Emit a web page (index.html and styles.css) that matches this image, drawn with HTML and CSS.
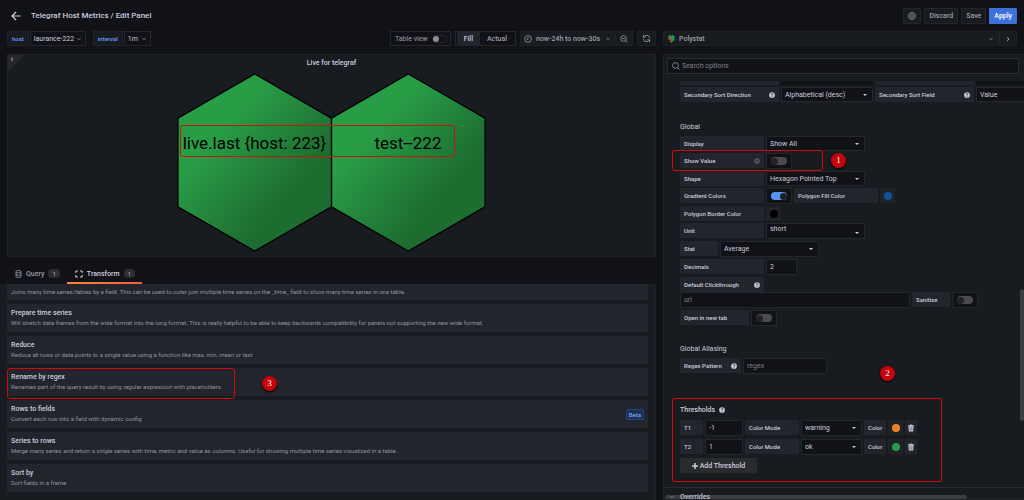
FILE: index.html
```html
<!DOCTYPE html>
<html lang="en">
<head>
<meta charset="utf-8">
<title>Telegraf Host Metrics / Edit Panel</title>
<link rel="stylesheet" href="styles.css">
</head>
<body>
<svg class="defs" width="0" height="0" aria-hidden="true">
  <symbol id="chev" viewBox="0 0 8 8"><path d="M2.500 3.200L4 4.700l1.500-1.500" fill="none" stroke="currentColor" stroke-width=".8"/></symbol>
  <symbol id="help" viewBox="0 0 8 8"><circle cx="4" cy="4" r="3.800" fill="currentColor"/><path d="M2.800 3.100c.1-1.500 2.500-1.400 2.400 0C5.200 3.900 4 3.900 4 4.800M4 5.600v1" fill="none" stroke="#22252b" stroke-width="1"/></symbol>
  <symbol id="trash" viewBox="0 0 8 8"><path d="M1 1.200h2l.4-.7h1.200l.4.7h2v1H1zM1.500 2.600h5L6.200 7.600H1.800z" fill="currentColor"/><path d="M3 3.500v3M4 3.500v3M5 3.500v3" stroke="#22252b" stroke-width=".4"/></symbol>
</svg>

<header class="topbar">
  <button class="back" aria-label="Go back"><svg width="10" height="10" viewBox="0 0 10 10"><path d="M9.500 5H1M5 1L1 5l4 4" fill="none" stroke="currentColor" stroke-width="1.200"/></svg></button>
  <h1>Telegraf Host Metrics / Edit Panel</h1>
  <div class="actions">
    <button class="btn icon" aria-label="Settings"><svg width="8" height="8" viewBox="0 0 16 16" fill="none" stroke="currentColor" stroke-width="1.600"><path d="M6.600 1h2.800l.5 2 1.800-1 2 2-1 1.900 2.200.6v2.900l-2.200.6 1 1.900-2 2-1.800-1-.5 2.100H6.600l-.5-2.100-1.900 1-2-2 1.100-1.900L1 9.400V6.500l2.300-.6-1.100-1.900 2-2 1.900 1z"/><circle cx="8" cy="8" r="2.700"/></svg></button>
    <button class="btn">Discard</button>
    <button class="btn">Save</button>
    <button class="btn primary">Apply</button>
  </div>
</header>

<main class="editor">
  <section class="left">
    <div class="toolbar">
      <div class="variable"><label for="host">host</label><span class="pick"><select id="host" class="host"><option>laurance-222</option></select><svg class="chev"><use href="#chev"/></svg></span></div>
      <div class="variable"><label for="interval">interval</label><span class="pick"><select id="interval" class="interval"><option>1m</option></select><svg class="chev"><use href="#chev"/></svg></span></div>
      <div class="tools">
        <label class="tableview">Table view <input type="checkbox" class="mini"></label>
        <div class="segment"><button class="on">Fill</button><button>Actual</button></div>
        <div class="time">
          <button class="range"><svg width="8" height="8" viewBox="0 0 8 8" fill="none" stroke="currentColor" stroke-width=".8"><circle cx="4" cy="4" r="3.400"/><path d="M4 4.300V2M4 4.300H2.500"/></svg><span>now-24h to now-30s</span><svg class="chev"><use href="#chev"/></svg></button>
          <button class="zoom" aria-label="Zoom out"><svg width="8" height="8" viewBox="0 0 8 8" fill="none" stroke="currentColor" stroke-width=".8"><circle cx="3.500" cy="3.500" r="2.900"/><path d="M5.600 5.600l2 2M2 3.500h3"/></svg></button>
        </div>
        <button class="refresh" aria-label="Refresh"><svg width="9" height="9" viewBox="0 0 9 9" fill="none" stroke="currentColor" stroke-width=".8"><path d="M1.500.8v2.400h2.300M1.600 3.100a3.300 3.300 0 0 1 6.200 1.200M7.500 8.200V5.800H5.200M7.400 5.900A3.300 3.300 0 0 1 1.200 4.700"/></svg></button>
      </div>
    </div>

    <article class="panel">
      <span class="corner" aria-hidden="true">i</span>
      <h2>Live for telegraf</h2>
      <svg class="hexes" width="309" height="179" viewBox="177 73 309 179">
        <defs><linearGradient id="green" x1="30%" y1="30%" x2="70%" y2="70%"><stop offset="0" stop-color="#299c46"/><stop offset="1" stop-color="#1d6d31"/></linearGradient></defs>
        <g fill="url(#green)" stroke="#000" stroke-width="1.200">
          <path d="M254.700 74l76.700 44.200v88.600L254.700 251 178 206.800v-88.600z"/>
          <path d="M408.300 74l76.700 44.200v88.600L408.300 251l-76.700-44.200v-88.600z"/>
        </g>
        <g class="hextext" text-anchor="middle"><text x="254.500" y="149">live.last {host: 223}</text><text x="408" y="149">test--222</text></g>
        <rect class="mark" x="180.500" y="125.500" width="274" height="31" rx="2"/>
      </svg>
    </article>

    <nav class="tabs">
      <button class="tab"><svg width="7" height="8" viewBox="0 0 7 8" fill="none" stroke="currentColor" stroke-width=".8"><rect x="1" y=".6" width="5" height="6.800" rx="1.200"/><path d="M1 2.800h5M1 5.100h5"/></svg>Query<span class="count">1</span></button>
      <button class="tab active"><svg width="8" height="8" viewBox="0 0 8 8" fill="none" stroke="currentColor"><path d="M.8 3V1H3M5 1h2.200v2M7.200 5v2H5M3 7H.8V5"/></svg>Transform<span class="count">1</span></button>
    </nav>

    <div class="transforms">
      <div class="card first"><p>Joins many time series/tables by a field. This can be used to outer join multiple time series on the _time_ field to show many time series in one table.</p></div>
      <div class="card"><h3>Prepare time series</h3><p>Will stretch data frames from the wide format into the long format. This is really helpful to be able to keep backwards compatibility for panels not supporting the new wide format.</p></div>
      <div class="card"><h3>Reduce</h3><p>Reduce all rows or data points to a single value using a function like max, min, mean or last</p></div>
      <div class="card"><h3>Rename by regex</h3><p>Renames part of the query result by using regular expression with placeholders.</p><span class="box box-regex"></span><span class="pin pin-3">3</span></div>
      <div class="card"><h3>Rows to fields</h3><p>Convert each row into a field with dynamic config</p><span class="beta">Beta</span></div>
      <div class="card"><h3>Series to rows</h3><p>Merge many series and return a single series with time, metric and value as columns. Useful for showing multiple time series visualized in a table.</p></div>
      <div class="card"><h3>Sort by</h3><p>Sort fields in a frame</p></div>
    </div>
  </section>

  <aside class="right">
    <div class="viz">
      <button class="vizname"><svg width="7" height="8" viewBox="0 0 7 8"><path d="M0 1l1.500-1L3 1 4.500 0 6 1l1 1-1 1.500.8 1.500L5 6 3.700 8 2 6.500 2 5 .6 4.200 1 2.500z" fill="#13a04a"/><path d="M0 2.200h2v2H0zM2 3.800h2v2.200H2z" fill="#d82c32"/></svg>Polystat<svg class="chev"><use href="#chev"/></svg></button>
      <button class="vizmore" aria-label="Collapse options"><svg width="6" height="6" viewBox="0 0 6 6"><path d="M2 1.200L4 3 2 4.800" fill="none" stroke="currentColor"/></svg></button>
    </div>

    <div class="options">
      <label class="search"><svg width="8" height="8" viewBox="0 0 8 8" fill="none" stroke="currentColor" stroke-width=".8"><circle cx="3.500" cy="3.500" r="2.900"/><path d="M5.600 5.600l2 2"/></svg><input type="text" aria-label="Search options" placeholder="Search options"></label>

      <div class="form">
        <div class="row cut"><span class="name w99"></span><span class="blank w92"></span><span class="name w99"></span><span class="blank w92"></span></div>
        <div class="row"><label class="name w99" for="ssd">Secondary Sort Direction<svg class="help"><use href="#help"/></svg></label><span class="drop w92"><select id="ssd"><option>Alphabetical (desc)</option></select></span><label class="name w99" for="ssf">Secondary Sort Field<svg class="help"><use href="#help"/></svg></label><span class="drop w92"><select id="ssf"><option>Value</option></select></span></div>

        <h4 class="global">Global</h4>
        <div class="row"><label class="name w84" for="display">Display</label><span class="drop w99"><select id="display"><option>Show All</option></select></span></div>
        <div class="row tall"><label class="name w84" for="showvalue">Show Value<svg class="info" viewBox="0 0 8 8"><circle cx="4" cy="4" r="3" fill="none" stroke="currentColor" stroke-width=".8"/><path d="M4 2.200v.9M4 3.600v2.200" stroke="currentColor" stroke-width=".8"/></svg></label><span class="switch"><input id="showvalue" type="checkbox"></span><span class="box box-value"></span><span class="pin pin-1">1</span></div>
        <div class="row"><label class="name w84" for="shape">Shape</label><span class="drop w99"><select id="shape"><option>Hexagon Pointed Top</option></select></span></div>
        <div class="row tall"><label class="name w84" for="grad">Gradient Colors</label><span class="switch"><input id="grad" type="checkbox" checked></span><span class="name w84">Polygon Fill Color</span><button class="swatch" aria-label="Polygon fill color"><i class="blue"></i></button></div>
        <div class="row"><span class="name w84">Polygon Border Color</span><button class="swatch" aria-label="Polygon border color"><i class="black"></i></button></div>
        <div class="row tall"><label class="name w84" for="unit">Unit</label><span class="drop w99 unit"><select id="unit"><option>short</option></select></span></div>
        <div class="row tall"><label class="name w38" for="stat">Stat</label><span class="drop w99"><select id="stat"><option>Average</option></select></span></div>
        <div class="row tall"><label class="name w84" for="dec">Decimals</label><input class="text w31" id="dec" type="text" value="2"></div>
        <div class="row join"><label class="name w84" for="url">Default Clickthrough<svg class="help"><use href="#help"/></svg></label></div>
        <div class="row tall"><input class="text wurl" id="url" type="text" placeholder="url"><label class="name w38" for="san">Sanitize</label><span class="switch"><input id="san" type="checkbox"></span></div>
        <div class="row tall"><label class="name w69" for="newtab">Open in new tab</label><span class="switch"><input id="newtab" type="checkbox"></span></div>

        <h4 class="aliasing">Global Aliasing</h4>
        <div class="row tall"><label class="name w61" for="regex">Regex Pattern<svg class="help"><use href="#help"/></svg></label><input class="text w84" id="regex" type="text" placeholder="regex"></div>

        <section class="thresholds">
          <span class="box box-thresh"></span><span class="pin pin-2">2</span>
          <h4>Thresholds <svg class="help"><use href="#help"/></svg></h4>
          <div class="row tall"><label class="name w23" for="t1">T1</label><input class="text w38" id="t1" type="text" value="-1"><label class="name w54" for="m1">Color Mode</label><span class="drop w61"><select id="m1"><option>warning</option></select></span><span class="name w22">Color</span><button class="swatch" aria-label="T1 color"><i class="orange"></i></button><button class="del" aria-label="Delete T1"><svg width="7" height="7"><use href="#trash"/></svg></button></div>
          <div class="row tall"><label class="name w23" for="t2">T2</label><input class="text w38" id="t2" type="text" value="1"><label class="name w54" for="m2">Color Mode</label><span class="drop w61"><select id="m2"><option>ok</option></select></span><span class="name w22">Color</span><button class="swatch" aria-label="T2 color"><i class="green"></i></button><button class="del" aria-label="Delete T2"><svg width="7" height="7"><use href="#trash"/></svg></button></div>
          <button class="add"><svg width="6" height="6" viewBox="0 0 6 6"><path d="M3 0v6M0 3h6" stroke="currentColor" stroke-width="1.500"/></svg>Add Threshold</button>
        </section>
      </div>
      <div class="overrides"><svg class="chev"><use href="#chev"/></svg>Overrides</div>
      <span class="hbar"></span><span class="vbar"></span>
    </div>
  </aside>
</main>
</body>
</html>
```
FILE: styles.css
```css
* { box-sizing: border-box; }
body {
  margin: 0;
  height: 100vh;
  overflow: hidden;
  display: flex;
  flex-direction: column;
  background: #111217;
  color: #ccccdc;
  font: 7px/10px Roboto, "Liberation Sans", sans-serif;
}
h1, h2, h3, h4, p { margin: 0; font-size: 7px; font-weight: 400; }
button, input, select { font: inherit; color: inherit; margin: 0; padding: 0; border: 0; background: none; border-radius: 1px; }
select { appearance: none; width: 100%; height: 100%; }
svg { flex: none; }
.defs { position: absolute; }
.chev { width: 8px; height: 8px; color: #9d9eaa; }

/* header */
.topbar { display: flex; align-items: center; height: 31px; padding: 0 7px 0 11px; flex: none; }
.topbar h1 { font-size: 8px; font-weight: 500; margin-left: 10px; }
.back { display: flex; }
.actions { margin-left: auto; display: flex; gap: 3px; }
.btn { height: 16px; padding: 0 4px; border: 1px solid #23252b; background: #181b1f; color: #9d9eaa; font-weight: 500; display: flex; align-items: center; }
.btn.primary { background: #3d71d9; border-color: #3d71d9; color: #fff; }

/* columns */
.editor { flex: 1; min-height: 0; display: grid; grid-template-columns: minmax(0, 656fr) minmax(0, 361fr); gap: 7px; }
.left, .right { display: flex; flex-direction: column; min-height: 0; }

/* toolbar */
.toolbar { display: flex; gap: 7px; height: 15px; margin: 0 0 8px 7px; flex: none; }
.variable { display: flex; gap: 1px; }
.variable label { display: flex; align-items: center; padding: 0 4px; background: #181b1f; border: 1px solid #202226; color: #6e9fff; font-size: 6px; font-weight: 500; }
.pick { position: relative; display: flex; border: 1px solid #25272c; }
.pick select { padding: 0 3px; }
.pick .chev { position: absolute; right: 2px; top: 3px; pointer-events: none; }
.pick .host { width: 54px; }
.pick .interval { width: 25px; }
.tools { margin-left: auto; display: flex; gap: 4px; color: #9d9eaa; }
.tableview { display: flex; align-items: center; gap: 4px; padding: 0 3px 0 4px; border: 1px solid #25272c; }
.mini { appearance: none; width: 15px; height: 8px; border: 1px solid #25272c; border-radius: 4px; display: flex; align-items: center; }
.mini::before { content: ""; width: 6px; height: 6px; border-radius: 50%; background: #8e8e9a; }
.segment { display: flex; border: 1px solid #25272c; padding: 0 1px; }
.segment button { padding: 0 7px; font-weight: 500; }
.segment .on { background: #22252b; color: #ccccdc; }
.time { display: flex; background: #181b1f; border: 1px solid #202226; font-weight: 500; }
.range { display: flex; align-items: center; gap: 4px; padding: 0 3px; }
.zoom { display: flex; align-items: center; padding: 0 4px; border-left: 1px solid #202226; }
.refresh { display: flex; align-items: center; padding: 0 4px; background: #181b1f; border: 1px solid #202226; }

/* visualization panel */
.panel { position: relative; margin-left: 7px; border: 1px solid #202226; background: #181b1f; display: flex; flex-direction: column; align-items: center; padding: 2px 0 4px; flex: none; }
.panel h2 { font-weight: 500; line-height: 12px; margin-bottom: 4px; }
.corner { position: absolute; left: 0; top: 0; width: 16px; height: 16px; padding-left: 3px; line-height: 8px; color: #9d9eaa; background: linear-gradient(135deg, #26282e 50%, transparent 50%); font-family: "Liberation Serif", serif; font-weight: 700; }
.hexes { max-width: 100%; }
.hextext { font-size: 17px; fill: #000; }
.mark { fill: none; stroke: #c2170b; }

/* tabs */
.tabs { display: flex; height: 27px; padding-left: 7px; align-items: flex-end; flex: none; }
.tab { display: flex; align-items: center; gap: 4px; height: 19px; padding: 0 7px 0 8px; color: #9d9eaa; font-weight: 500; border-bottom: 2px solid transparent; border-radius: 0; }
.tab.active { color: #ccccdc; border-image: linear-gradient(90deg, #ff8833, #f55f3e) 0 0 2 0; }
.count { background: #2c2e34; border-radius: 4px; font-size: 6px; line-height: 9px; padding: 0 4px; color: #9d9eaa; }

/* transformation list */
.transforms { flex: 1; min-height: 0; background: #181b1f; border-right: 1px solid #202226; padding: 0 7px; display: flex; flex-direction: column; gap: 4px; }
.card { position: relative; height: 28px; padding: 4px; background: #22252b; border-radius: 1px; flex: none; white-space: nowrap; }
.card.first { height: 16px; }
.card h3 { font-weight: 500; line-height: 10px; }
.card p { font-size: 6px; line-height: 10px; color: #9293a0; }
.card.first p { line-height: 8px; }
.beta { position: absolute; right: 4px; top: 9px; padding: 0 2px; border: 1px solid #1f4380; border-radius: 1px; background: #1f3157; color: #8ab3fa; font-size: 6px; line-height: 9px; }

/* numbered annotations */
.box { position: absolute; border: 1px solid #d40808; border-radius: 3px; pointer-events: none; }
.pin { position: absolute; width: 15px; height: 15px; border-radius: 50%; background: #c4050b; color: #fff; font: 9px/15px "Liberation Serif", serif; text-align: center; box-shadow: 0 1px 2px #000; }
.box-regex { left: 0; top: 0; width: 228px; height: 31px; }
.pin-3 { left: 255px; top: 8px; }
.box-value { left: -8px; top: -3px; width: 151px; height: 21px; }
.pin-1 { left: 151px; top: 0; }
.box-thresh { left: -8px; top: 0; width: 270px; height: 84px; }
.pin-2 { left: 200px; top: -32px; }

/* options column */
.viz { display: flex; height: 15px; margin: 0 7px 8px 0; background: #181b1f; border: 1px solid #202226; flex: none; color: #9d9eaa; }
.vizname { flex: 1; display: flex; align-items: center; gap: 4px; padding: 0 4px; font-weight: 500; }
.vizname .chev { margin-left: auto; }
.vizmore { display: flex; align-items: center; padding: 0 5px; border-left: 1px solid #25272c; }
.options { position: relative; flex: 1; min-height: 0; overflow: hidden; background: #181b1f; border: 1px solid #202226; border-right: 0; padding: 3px 0 0 3px; }
.search { display: flex; align-items: center; gap: 2px; height: 16px; margin-right: 5px; padding: 0 4px; background: #111217; border: 1px solid #2a2c32; color: #9d9eaa; }
.search input { flex: 1; min-width: 0; outline: 0; }
input::placeholder { color: #80818c; opacity: 1; }
.form { padding: 7px 0 0 13px; }
.row { position: relative; display: flex; gap: 2px; height: 15px; margin-bottom: 2px; }
.row.tall { height: 16px; }
.row.cut { height: 4px; margin-bottom: 2px; }
.row.join { margin-bottom: 0; }
.name { display: flex; align-items: center; justify-content: space-between; height: 15px; padding: 0 4px; background: #22252b; border-radius: 1px; font-size: 6px; font-weight: 500; white-space: nowrap; flex: none; }
.row.cut .name { height: 4px; }
.blank { background: #111217; flex: none; }
.help { width: 6px; height: 6px; }
.info { width: 6px; height: 6px; color: #9d9eaa; }
.drop { position: relative; flex: none; background: #111217; border: 1px solid #25272c; border-radius: 1px; }
.drop select { padding: 0 3px; display: block; }
.drop::after { content: ""; position: absolute; right: 5px; top: 6px; border: 2px solid transparent; border-top-color: #ccccdc; border-bottom: 0; pointer-events: none; }
.unit select { padding-bottom: 5px; }
.unit::after { top: 8px; }
.text { height: 100%; padding: 0 3px; background: #111217; border: 1px solid #25272c; flex: none; }
.switch { width: 26px; flex: none; display: flex; align-items: center; justify-content: center; background: #111217; border: 1px solid #22252b; }
.switch input { appearance: none; width: 16px; height: 8px; border-radius: 4px; background: #4b4b4d; display: flex; align-items: center; }
.switch input::before { content: ""; width: 7px; height: 7px; border-radius: 50%; background: #202226; }
.switch input:checked { background: #5794f2; justify-content: flex-end; }
.swatch { width: 15px; height: 15px; background: #202226; display: flex; align-items: center; justify-content: center; flex: none; }
.swatch i { width: 8px; height: 8px; border-radius: 50%; }
.blue { background: #0a55a1; }
.black { background: #000; }
.orange { background: #ed8128; }
.green { background: #299c46; }
.del { width: 12px; height: 15px; background: #22252b; display: flex; align-items: center; justify-content: center; }
.del svg { width: 8px; height: 8px; }
.w22 { width: 22px; }
.w23 { width: 23px; }
.w31 { width: 31px; }
.w38 { width: 38px; }
.w54 { width: 54px; }
.w61 { width: 61px; }
.w69 { width: 69px; }
.w84 { width: 84px; }
.w92 { width: 92px; }
.w99 { width: 99px; }
.wurl { width: 230px; }
.form h4 { line-height: 10px; }
.form .global { margin: 20px 0 4px; }
.form .aliasing { margin: 18px 0 4px; }
.thresholds { position: relative; margin-top: 24px; padding-top: 7px; }
.thresholds h4 { display: flex; align-items: center; gap: 4px; font-weight: 500; margin-bottom: 5px; }
.thresholds .row { margin-bottom: 3px; }
.add { display: flex; align-items: center; justify-content: center; gap: 2px; width: 77px; height: 15px; background: #2a2b2f; font-weight: 500; }
.overrides { display: flex; align-items: center; gap: 4px; margin: 14px 0 0 -3px; padding: 4px 0 0 4px; border-top: 1px solid #2a2c32; font-weight: 500; }
.hbar, .vbar { position: absolute; background: #8e8e9a4d; border-radius: 2px; }
.hbar { left: 1px; bottom: 0; width: 84%; height: 4px; }
.vbar { right: 0; top: 234px; width: 4px; height: 132px; }
```
